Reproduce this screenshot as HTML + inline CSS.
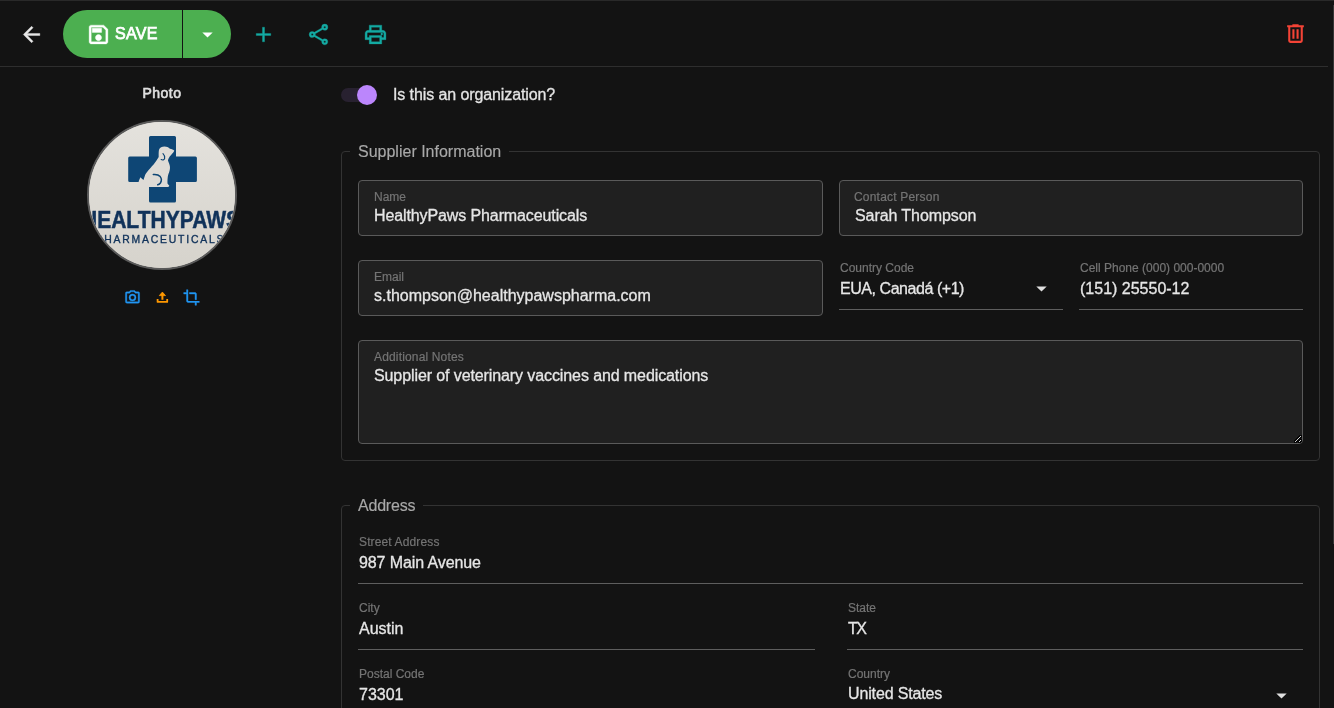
<!DOCTYPE html>
<html><head><meta charset="utf-8">
<style>
*{box-sizing:border-box;margin:0;padding:0}
html,body{width:1334px;height:708px;overflow:hidden;background:#131313;font-family:"Liberation Sans",sans-serif;color:#e4e4e4}
.abs{position:absolute;will-change:transform}
.topline{left:0;top:0;width:1334px;height:1px;background:#292929}
.rightline{left:1333px;top:5px;width:1px;height:539px;background:#363636}
.hdrline{left:0;top:66px;width:1328px;height:1px;background:#2e2e2e}
svg{display:block}
.save{left:63px;top:10px;width:168px;height:48px;border-radius:24px;background:#4caf50}
.split{left:182px;top:10px;width:1px;height:48px;background:#131313}
.savetxt{left:115px;top:24px;font-size:16px;font-weight:normal;-webkit-text-stroke-width:0.75px;color:#fff;letter-spacing:0.3px;line-height:20px}
.photo-t{left:112px;top:85px;width:100px;text-align:center;font-size:14px;letter-spacing:0.45px;font-weight:normal;-webkit-text-stroke-width:0.6px;color:#e0e0e0;line-height:16px}
.circle{left:87px;top:120px;width:150px;height:150px;border-radius:50%;border:2px solid #5a5a5a;overflow:hidden;background:#dddad4}
.track{left:341px;top:88px;width:34px;height:14px;border-radius:7px;background:#282130}
.thumb{left:357px;top:85px;width:20px;height:20px;border-radius:50%;background:#bb86fc}
.org{left:393px;top:85px;font-size:16px;line-height:20px;letter-spacing:-0.1px;color:#e4e4e4;-webkit-text-stroke-width:0.3px}
.fs{border:1px solid #333;border-radius:4px}
.legend{font-size:16px;color:#a8a8a8;-webkit-text-stroke-width:0.15px;background:#131313;padding:0 8px;line-height:20px}
.box{border:1px solid #5a5a5a;border-radius:4px;background:#202020}
.lbl{font-size:12px;color:#747474;line-height:14px;white-space:nowrap;-webkit-text-stroke-width:0.2px}
.val{font-size:16px;color:#e6e6e6;line-height:20px;white-space:nowrap;-webkit-text-stroke-width:0.3px}
.ul{height:1px;background:#5e5e5e}
</style></head><body>
<div class="abs topline"></div>
<div class="abs rightline"></div>
<div class="abs hdrline"></div>

<!-- back arrow -->
<svg class="abs" style="left:18.5px;top:22.2px" width="25" height="25" viewBox="0 0 24 24"><path fill="#e8e8e8" stroke="#e8e8e8" stroke-width="0.4" d="M20,11V13H8L13.5,18.5L12.08,19.92L4.16,12L12.08,4.08L13.5,5.5L8,11H20Z"/></svg>

<div class="abs save"></div>
<div class="abs split"></div>
<svg class="abs" style="left:86px;top:21.5px" width="25" height="25" viewBox="0 0 24 24"><path fill="#fff" stroke="#fff" stroke-width="0.35" d="M17 3H5C3.89 3 3 3.9 3 5V19C3 20.1 3.89 21 5 21H19C20.1 21 21 20.1 21 19V7L17 3M19 19H5V5H16.17L19 7.83V19M12 12C10.34 12 9 13.34 9 15S10.34 18 12 18 15 16.66 15 15 13.66 12 12 12M6 6H15V10H6V6Z"/></svg>
<div class="abs savetxt">SAVE</div>
<svg class="abs" style="left:194.8px;top:21.5px" width="25" height="25" viewBox="0 0 24 24"><path fill="#fff" d="M7,10L12,15L17,10H7Z"/></svg>

<!-- plus, share, print -->
<svg class="abs" style="left:251px;top:22px" width="25" height="25" viewBox="0 0 24 24"><path fill="#14aaa3" stroke="#14aaa3" stroke-width="0.3" d="M19,13H13V19H11V13H5V11H11V5H13V11H19V13Z"/></svg>
<svg class="abs" style="left:306px;top:22px" width="25" height="25" viewBox="0 0 24 24"><path fill="#14aaa3" stroke="#14aaa3" stroke-width="0.3" d="M18,16.08C17.24,16.08 16.56,16.38 16.04,16.85L8.91,12.7C8.96,12.47 9,12.24 9,12C9,11.76 8.96,11.53 8.91,11.3L15.96,7.19C16.5,7.69 17.21,8 18,8A3,3 0 0,0 21,5A3,3 0 0,0 18,2A3,3 0 0,0 15,5C15,5.24 15.04,5.47 15.09,5.7L8.04,9.81C7.5,9.31 6.79,9 6,9A3,3 0 0,0 3,12A3,3 0 0,0 6,15C6.79,15 7.5,14.69 8.04,14.19L15.16,18.34C15.11,18.55 15.08,18.77 15.08,19C15.08,20.61 16.39,21.91 18,21.91C19.61,21.91 20.92,20.61 20.92,19A2.92,2.92 0 0,0 18,16.08M18,4A1,1 0 0,1 19,5A1,1 0 0,1 18,6A1,1 0 0,1 17,5A1,1 0 0,1 18,4M6,11A1,1 0 0,1 7,12A1,1 0 0,1 6,13A1,1 0 0,1 5,12A1,1 0 0,1 6,11M18,18A1,1 0 0,1 19,19A1,1 0 0,1 18,20A1,1 0 0,1 17,19A1,1 0 0,1 18,18Z"/></svg>
<svg class="abs" style="left:363px;top:22px" width="25" height="25" viewBox="0 0 24 24"><path fill="#14aaa3" stroke="#14aaa3" stroke-width="0.3" d="M19 8C20.66 8 22 9.34 22 11V17H18V21H6V17H2V11C2 9.34 3.34 8 5 8H6V3H18V8H19M8 5V8H16V5H8M16 19V15H8V19H16M18 15H20V11C20 10.45 19.55 10 19 10H5C4.450 10 4 10.45 4 11V15H6V13H18V15M19 11.5C19 12.05 18.55 12.5 18 12.5C17.45 12.5 17 12.05 17 11.5C17 10.95 17.45 10.5 18 10.5C18.55 10.5 19 10.95 19 11.5Z"/></svg>

<!-- trash -->
<svg class="abs" style="left:1282.8px;top:21.2px" width="25" height="25" viewBox="0 0 24 24"><path fill="#f44336" d="M9,3V4H4V6H5V19A2,2 0 0,0 7,21H17A2,2 0 0,0 19,19V6H20V4H15V3H9M7,6H17V19H7V6M9,8V17H11V8H9M13,8V17H15V8H13Z"/></svg>

<!-- photo -->
<div class="abs photo-t">Photo</div>
<div class="abs circle"></div>
<svg class="abs" style="left:89px;top:122px" width="146" height="146" viewBox="89 122 146 146">
<defs><linearGradient id="lg" x1="0" y1="0" x2="0" y2="1"><stop offset="0" stop-color="#e4e2dd"/><stop offset="1" stop-color="#d6d3cc"/></linearGradient><clipPath id="cc"><circle cx="162" cy="195" r="73"/></clipPath></defs>
<g clip-path="url(#cc)">
<rect x="89" y="122" width="146" height="146" fill="url(#lg)"/>
<path fill="#0e4675" d="M150.5,136H174.5a1.5,1.5 0 0 1 1.5,1.5V156.5H195.4a1.5,1.5 0 0 1 1.5,1.5V180.6a1.5,1.5 0 0 1 -1.5,1.5H176V201a1.5,1.5 0 0 1 -1.5,1.5H150.5a1.5,1.5 0 0 1 -1.5,-1.5V182.1H129.7a1.5,1.5 0 0 1 -1.5,-1.5V158a1.5,1.5 0 0 1 1.5,-1.5H149V137.5a1.5,1.5 0 0 1 1.5,-1.5Z"/>
<path fill="#dedbd6" d="M174.3,150.8C173.6,149.6 171.6,149.2 169.9,148.8C168.6,147.4 166.6,146.6 164.5,146.6C162,146.6 159.8,147.8 159,149.8C158.6,151.6 158.6,154.6 158.7,156.6C158.6,157.2 158.5,157.4 158.4,157.6C157,160 155.4,162.2 153.6,164.4C151.6,166.6 149.6,168.6 148.2,170.5C146.6,172.4 145.4,174.2 144.8,175.9C144.2,177.4 143.8,178.8 143.5,180C142.6,179.4 141.4,178.4 140.4,177.3C139.8,178.8 139.2,180 138.7,181.3L138.7,187H167.9C168.8,186.6 169.4,186 169.2,185.4C168.6,184.6 167.8,184 167.5,183.4C167.4,180.6 167.6,178 167.9,175.9C168.6,173.6 169.6,171.4 169.9,169.1C170.2,167 169.8,165.2 169.2,163.7C168.8,162.6 168.2,161.4 167.9,160.3C168.4,158.6 169.2,157.2 169.9,156.2C171.4,154.6 173.4,152.8 174.3,150.8Z"/>
<path fill="none" stroke="#0e4675" stroke-width="1.2" stroke-linecap="round" d="M163,153.6C164.4,155 165,157.2 164.6,158.6C164.2,160 162.6,160.4 161.2,159.6"/>
<path fill="none" stroke="#0e4675" stroke-width="1.5" stroke-linecap="round" d="M153.3,174.5C156,174.2 158.6,174.8 160.2,176.6C161.6,178.4 161.6,181 160.4,183C159.6,184 158.8,184.6 157.7,184.8"/>
<text x="82" y="228" font-family="Liberation Sans" font-weight="bold" font-size="23" fill="#10325a" stroke="#10325a" stroke-width="0.5" textLength="158" lengthAdjust="spacingAndGlyphs">HEALTHYPAWS</text>
<text x="95.5" y="242.8" font-family="Liberation Sans" font-weight="normal" font-size="10.4" fill="#10325a" stroke="#10325a" stroke-width="0.35" textLength="128" lengthAdjust="spacing">PHARMACEUTICALS</text>
</g></svg>

<!-- toggle -->
<div class="abs track"></div>
<div class="abs thumb"></div>
<div class="abs org">Is this an organization?</div>

<!-- Supplier fieldset -->
<div class="abs fs" style="left:341px;top:151px;width:979px;height:310px"></div>
<div class="abs legend" style="left:350px;top:142px">Supplier Information</div>

<div class="abs box" style="left:358px;top:180px;width:465px;height:56px"></div>
<div class="abs lbl" style="left:374px;top:190px">Name</div>
<div class="abs val" style="left:374px;top:206px;letter-spacing:-0.11px">HealthyPaws Pharmaceuticals</div>

<div class="abs box" style="left:839px;top:180px;width:464px;height:56px"></div>
<div class="abs lbl" style="left:854px;top:190px;letter-spacing:0.2px">Contact Person</div>
<div class="abs val" style="left:855px;top:206px;letter-spacing:-0.08px">Sarah Thompson</div>

<div class="abs box" style="left:358px;top:260px;width:465px;height:56px"></div>
<div class="abs lbl" style="left:374px;top:270px">Email</div>
<div class="abs val" style="left:374px;top:286px">s.thompson@healthypawspharma.com</div>

<div class="abs lbl" style="left:840px;top:261px">Country Code</div>
<div class="abs val" style="left:840px;top:279px;letter-spacing:-0.45px">EUA, Canadá (+1)</div>
<div class="abs ul" style="left:839px;top:309px;width:224px"></div>
<div class="abs lbl" style="left:1080px;top:261px">Cell Phone (000) 000-0000</div>
<div class="abs val" style="left:1080px;top:279px">(151) 25550-12</div>
<div class="abs ul" style="left:1079px;top:309px;width:224px"></div>

<div class="abs box" style="left:358px;top:340px;width:945px;height:104px"></div>
<div class="abs lbl" style="left:374px;top:350px;letter-spacing:0.16px">Additional Notes</div>
<div class="abs val" style="left:374px;top:366px;letter-spacing:-0.1px">Supplier of veterinary vaccines and medications</div>

<!-- Address fieldset -->
<div class="abs fs" style="left:341px;top:505px;width:979px;height:260px"></div>
<div class="abs legend" style="left:350px;top:496px;letter-spacing:-0.2px">Address</div>

<div class="abs lbl" style="left:359px;top:535px;letter-spacing:0.13px">Street Address</div>
<div class="abs val" style="left:359px;top:553px;letter-spacing:-0.1px">987 Main Avenue</div>
<div class="abs ul" style="left:358px;top:583px;width:945px"></div>

<div class="abs lbl" style="left:359px;top:601px">City</div>
<div class="abs val" style="left:359px;top:619px">Austin</div>
<div class="abs ul" style="left:358px;top:649px;width:457px"></div>

<div class="abs lbl" style="left:848px;top:601px">State</div>
<div class="abs val" style="left:848px;top:619px;letter-spacing:-1.5px">TX</div>
<div class="abs ul" style="left:847px;top:649px;width:456px"></div>

<div class="abs lbl" style="left:359px;top:667px">Postal Code</div>
<div class="abs val" style="left:359px;top:685px">73301</div>

<div class="abs lbl" style="left:848px;top:667px">Country</div>
<div class="abs val" style="left:848px;top:684px;letter-spacing:-0.14px">United States</div>

<svg class="abs" style="left:1028.8px;top:276.3px" width="25" height="25" viewBox="0 0 24 24"><path fill="#e0e0e0" d="M7,10L12,15L17,10H7Z"/></svg>
<svg class="abs" style="left:1269px;top:682.5px" width="25" height="25" viewBox="0 0 24 24"><path fill="#e0e0e0" d="M7,10L12,15L17,10H7Z"/></svg>
<svg class="abs" style="left:1290px;top:431px" width="16" height="16" viewBox="1290 431 16 16" shape-rendering="crispEdges"><rect x="1294" y="440" width="3" height="3" fill="#050505"/><rect x="1295" y="439" width="3" height="3" fill="#050505"/><rect x="1296" y="438" width="3" height="3" fill="#050505"/><rect x="1297" y="437" width="3" height="3" fill="#050505"/><rect x="1298" y="436" width="3" height="3" fill="#050505"/><rect x="1299" y="435" width="3" height="3" fill="#050505"/><rect x="1298" y="440" width="3" height="3" fill="#050505"/><rect x="1299" y="439" width="3" height="3" fill="#050505"/><rect x="1295" y="441" width="1" height="1" fill="#d0d0d0"/><rect x="1296" y="440" width="1" height="1" fill="#d0d0d0"/><rect x="1297" y="439" width="1" height="1" fill="#d0d0d0"/><rect x="1298" y="438" width="1" height="1" fill="#d0d0d0"/><rect x="1299" y="437" width="1" height="1" fill="#d0d0d0"/><rect x="1300" y="436" width="1" height="1" fill="#d0d0d0"/><rect x="1299" y="441" width="1" height="1" fill="#d0d0d0"/><rect x="1300" y="440" width="1" height="1" fill="#d0d0d0"/></svg>

<svg class="abs" style="left:124px;top:289.1px" width="17" height="17" viewBox="0 0 24 24"><path fill="#2196f3" stroke="#2196f3" stroke-width="0.5" d="M20,4H16.83L15,2H9L7.17,4H4A2,2 0 0,0 2,6V18A2,2 0 0,0 4,20H20A2,2 0 0,0 22,18V6A2,2 0 0,0 20,4M20,18H4V6H8.05L9.88,4H14.12L15.95,6H20V18M12,7A5,5 0 0,0 7,12A5,5 0 0,0 12,17A5,5 0 0,0 17,12A5,5 0 0,0 12,7M12,15A3,3 0 0,1 9,12A3,3 0 0,1 12,9A3,3 0 0,1 15,12A3,3 0 0,1 12,15Z"/></svg>
<svg class="abs" style="left:150px;top:285px" width="24" height="24" viewBox="150 285 24 24"><path fill="#ff9800" stroke="#ff9800" stroke-width="0.8" stroke-linejoin="round" d="M162.4,292.1L165.5,295.6H159.3Z"/><rect x="161.4" y="295" width="2" height="4.8" fill="#ff9800"/><path fill="none" stroke="#ff9800" stroke-width="1.8" stroke-linejoin="round" d="M157.6,298.9V301.9H167.2V298.9"/></svg>
<svg class="abs" style="left:183.2px;top:288.5px" width="17" height="17" viewBox="0 0 24 24"><path fill="#2196f3" stroke="#2196f3" stroke-width="0.6" d="M7,17V1H5V5H1V7H5V17A2,2 0 0,0 7,19H17V23H19V19H23V17M17,15H19V7C19,5.89 18.1,5 17,5H9V7H17V15Z"/></svg>
</body></html>
